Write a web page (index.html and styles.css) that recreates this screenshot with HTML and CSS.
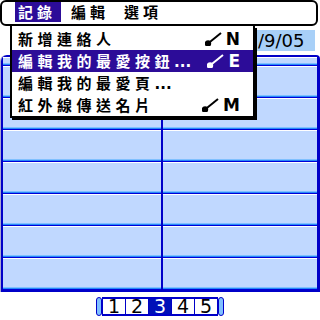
FILE: index.html
```html
<html>
<head>
  <meta charset="utf-8">
  <link rel="stylesheet" href="styles.css">
</head>
<body>
  <div class="screen">
    <div class="titlebar">
      <div class="date">/9/05</div>
    </div>

    <div class="table">
      <div class="row head"><div class="cell"></div><div class="cell"></div></div>
      <div class="row"><div class="cell"></div><div class="cell"></div></div>
      <div class="row"><div class="cell"></div><div class="cell"></div></div>
      <div class="row"><div class="cell"></div><div class="cell"></div></div>
      <div class="row"><div class="cell"></div><div class="cell"></div></div>
      <div class="row"><div class="cell"></div><div class="cell"></div></div>
      <div class="row"><div class="cell"></div><div class="cell"></div></div>
      <div class="row"><div class="cell"></div><div class="cell"></div></div>
    </div>

    <div class="pager">
      <span class="cap"></span>
      <span class="page">1</span>
      <span class="page">2</span>
      <span class="page current">3</span>
      <span class="page">4</span>
      <span class="page">5</span>
      <span class="cap"></span>
    </div>

    <!-- menu lies over the list -->
    <div class="menubar">
      <span class="menu active">記錄</span>
      <span class="menu">編輯</span>
      <span class="menu">選項</span>
    </div>
    <ul class="dropdown">
      <li>
        <span class="label">新增連絡人</span>
        <span class="key"><svg width="18" height="14" viewBox="0 0 18 14"><line x1="3" y1="11.5" x2="16" y2="1"/><circle cx="3" cy="11.5" r="2.2"/></svg>N</span>
      </li>
      <li class="selected">
        <span class="label">編輯我的最愛按鈕<span class="dots">...</span></span>
        <span class="key"><svg width="18" height="14" viewBox="0 0 18 14"><line x1="3" y1="11.5" x2="16" y2="1"/><circle cx="3" cy="11.5" r="2.2"/></svg>E</span>
      </li>
      <li>
        <span class="label">編輯我的最愛頁<span class="dots">...</span></span>
      </li>
      <li>
        <span class="label">紅外線傳送名片</span>
        <span class="key"><svg width="18" height="14" viewBox="0 0 18 14"><line x1="3" y1="11.5" x2="16" y2="1"/><circle cx="3" cy="11.5" r="2.2"/></svg>M</span>
      </li>
    </ul>
  </div>
</body>
</html>
```

FILE: styles.css
```css
body {
  margin: 0;
  background: #fff;
  font-family: "Noto Sans CJK TC", "DejaVu Sans", sans-serif;
}
.screen {
  position: relative;
  width: 320px;
  height: 320px;
  overflow: hidden;
}
.titlebar {
  height: 55px;
  display: flex;
}
.date {
  margin: 30px 5px 0 auto;
  width: 57px;
  height: 21px;
  padding-left: 4px;
  background: #a8d0f8;
  font: 18px/21px "DejaVu Sans", sans-serif;
  color: #000;
}
.table {
  border-left: 1px solid #a8a8d0;
  border-radius: 6px 6px 0 0;
}
.table .row {
  display: flex;
  height: 32px;
  border-left: 2px solid #0000c8;
  border-right: 3px solid #0000c8;
}
.table .row.head {
  height: 9px;
  border-top: 2px solid #0000c8;
  border-radius: 6px 4px 0 0;
}
.table .row:last-child {
  border-bottom: 2px solid #0000c8;
}
.cell {
  flex: 1;
  background: linear-gradient(#fff 0 1px, #c0d8ff 1px calc(100% - 3px), #80c0ff calc(100% - 3px) calc(100% - 2px), #2888f8 calc(100% - 2px) calc(100% - 1px), #0000d8 calc(100% - 1px));
}
.cell:first-child {
  flex: 0 0 158px;
  border-right: 2px solid #0000c8;
}
.pager {
  margin-top: 5px;
  display: flex;
  justify-content: center;
  height: 19px;
}
.cap {
  width: 4px;
  border: 1px solid #0000c8;
  background: #80c0ff;
  border-radius: 4px;
}
.page {
  width: 22px;
  height: 15px;
  border: 2px solid #0000c8;
  border-left: 0;
  border-right: 1px solid #0000c8;
  background: #fff;
  font: 500 19px/15px "DejaVu Sans", sans-serif;
  text-align: center;
  color: #000;
}
.cap + .page {
  border-left: 1px solid #0000c8;
}
.page.current {
  background: #0010b8;
  color: #fff;
}
.menubar {
  position: absolute;
  top: 0;
  left: 0;
  height: 22px;
  width: 301px;
  padding: 0 0 0 13px;
  box-sizing: content-box;
  border: 2px solid #000;
  border-radius: 6px;
  background: #fff;
  display: flex;
}
.menu {
  font-size: 15px;
  font-weight: 700;
  line-height: 20px;
  letter-spacing: 4px;
  padding: 0 5px 0 3px;
  margin-right: 7px;
  height: 20px;
  color: #000;
}
.menu.active {
  background: #2c0c98;
  color: #fff;
}
.dropdown {
  position: absolute;
  top: 26px;
  left: 10px;
  width: 241px;
  margin: 0;
  padding: 2px 0 0;
  list-style: none;
  border: 2px solid #000;
  border-top: 0;
  background: #fff;
  box-shadow: 2px 2px 0 #000;
}
.dropdown li {
  display: flex;
  align-items: center;
  height: 22px;
  line-height: 22px;
  padding: 0 13px 0 6px;
  font-size: 15px;
  font-weight: 700;
  letter-spacing: 4.5px;
  color: #000;
}
.dropdown li.selected {
  background: #2c0c98;
  color: #fff;
}
.label {
  flex: 1;
  white-space: nowrap;
}
.dots {
  letter-spacing: 0;
  font-family: "DejaVu Sans", sans-serif;
  font-size: 15px;
}
.key {
  display: flex;
  align-items: center;
  font: 700 17px/22px "DejaVu Sans", sans-serif;
  letter-spacing: 0;
}
.key svg {
  margin-right: 3px;
  stroke: currentColor;
  stroke-width: 2;
  fill: currentColor;
}
```
